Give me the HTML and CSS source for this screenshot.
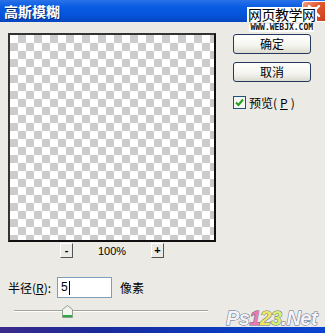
FILE: index.html
```html
<!DOCTYPE html>
<html>
<head>
<meta charset="utf-8">
<link rel="stylesheet" href="styles.css">
</head>
<body>
<div class="dialog">
  <div class="titlebar">
    <span class="title">高斯模糊</span>
    <span class="close"><svg width="14" height="14" viewBox="0 0 14 14"><path d="M2 2 L12 12 M12 2 L2 12" stroke="#fff" stroke-width="2.4" stroke-linecap="round"/></svg></span>
  </div>
  <div class="content">
    <div class="left">
      <div class="preview"></div>
      <div class="zoomrow">
        <span class="zbtn">-</span>
        <span class="zoomval">100%</span>
        <span class="zbtn">+</span>
      </div>
      <div class="radiusrow">
        <span class="lbl">半径(<u>R</u>):</span>
        <span class="input">5<i class="caret"></i></span>
        <span class="unit">像素</span>
      </div>
      <div class="slider">
        <div class="track"></div>
        <svg class="thumb" width="11" height="13" viewBox="0 0 11 13"><path d="M0.5 4.5 L5.5 0.5 L10.5 4.5 L10.5 12.5 L0.5 12.5 Z" fill="#f4f4ee" stroke="#8aa08a"/><path d="M1 10.5 H10 M1 11.5 H10" stroke="#2fa84a"/></svg>
      </div>
    </div>
    <div class="right">
      <button class="btn">确定</button>
      <button class="btn btn2">取消</button>
      <label class="check"><span class="box"><svg width="9" height="9" viewBox="0 0 9 9"><path d="M1 4.5 L3.5 7 L8 1.5" fill="none" stroke="#21a121" stroke-width="2"/></svg></span>预览(<u>P</u>)</label>
    </div>
  </div>
  <div class="bottombar"></div>
  <div class="wm-top">
    <div class="wm-cn">网页教学网</div>
    <div class="wm-en">WWW.WEBJX.COM</div>
  </div>
  <div class="wm-bottom">Ps<span class="c1">1</span><span class="c2">2</span><span class="c3">3</span>.Net</div>
</div>
</body>
</html>
```
FILE: styles.css
```css
html, body {
  margin: 0;
  padding: 0;
}
body {
  width: 325px;
  height: 333px;
  overflow: hidden;
  background: #ebeae4;
  font-family: "Noto Sans CJK SC", "Liberation Sans", sans-serif;
  font-size: 12px;
  color: #000;
}
.dialog {
  position: relative;
  width: 325px;
  height: 333px;
  display: flex;
  flex-direction: column;
}
.titlebar {
  height: 22px;
  flex: none;
  display: flex;
  align-items: center;
  justify-content: space-between;
  background: linear-gradient(#2a72e8 0%, #0a5de3 30%, #0553d8 70%, #0746c0 100%);
}
.title {
  color: #fff;
  font-weight: bold;
  font-size: 14px;
  padding-left: 4px;
  text-shadow: 1px 1px 0 #0a2a78;
  line-height: 22px;
}
.close {
  width: 23px;
  height: 21px;
  border: 1px solid #fff;
  border-right: none;
  border-radius: 3px 0 0 3px;
  background: linear-gradient(135deg, #f0a080 0%, #e2572d 45%, #c8401e 100%);
  display: flex;
  align-items: center;
  justify-content: center;
  box-sizing: border-box;
}
.content {
  flex: 1;
  display: flex;
  padding: 11px 0 0 8px;
  gap: 17px;
}
.left {
  width: 208px;
  display: flex;
  flex-direction: column;
}
.preview {
  width: 208px;
  height: 209px;
  box-sizing: border-box;
  border: 2px solid #111;
  border-top-color: #333;
  border-left-color: #333;
  background-color: #fff;
  background-image:
    linear-gradient(45deg, #cccccc 25%, transparent 25%, transparent 75%, #cccccc 75%),
    linear-gradient(45deg, #cccccc 25%, transparent 25%, transparent 75%, #cccccc 75%);
  background-size: 16px 16px;
  background-position: 0 0, 8px 8px;
}
.zoomrow {
  height: 16px;
  display: flex;
  align-items: center;
  padding-left: 52px;
}
.zbtn {
  width: 13px;
  height: 15px;
  box-sizing: border-box;
  border-right: 1px solid #555;
  border-bottom: 1px solid #555;
  border-top: 1px solid #fff;
  border-left: 1px solid #fff;
  font-family: "Liberation Sans", sans-serif;
  font-size: 11px;
  line-height: 12px;
  text-align: center;
  font-weight: bold;
}
.zoomval {
  width: 78px;
  text-align: center;
  font-family: "Liberation Sans", sans-serif;
  font-size: 11px;
  padding-top: 1px;
}
.radiusrow {
  margin-top: 19px;
  height: 21px;
  display: flex;
  align-items: center;
}
.lbl {
  width: 49px;
  white-space: nowrap;
}
.input {
  width: 55px;
  height: 21px;
  box-sizing: border-box;
  border: 1px solid #7f9db9;
  background: #fff;
  padding-left: 3px;
  font-family: "Liberation Sans", sans-serif;
  font-size: 12px;
  line-height: 19px;
  display: flex;
  align-items: center;
}
.caret {
  display: inline-block;
  width: 1px;
  height: 14px;
  background: #000;
  margin-left: 1px;
}
.unit {
  margin-left: 8px;
}
.slider {
  position: relative;
  margin-top: 7px;
  height: 13px;
  margin-left: 6px;
  width: 194px;
}
.track {
  position: absolute;
  left: 0;
  right: 0;
  top: 5px;
  height: 1px;
  background: #a4a49a;
  border-bottom: 1px solid #fff;
}
.thumb {
  position: absolute;
  left: 48px;
  top: 0;
}
.right {
  display: flex;
  flex-direction: column;
  padding-top: 1px;
}
.btn {
  width: 78px;
  height: 20px;
  box-sizing: border-box;
  border: 1px solid #23395e;
  border-radius: 3px;
  background: linear-gradient(#ffffff 0%, #f4f4ef 60%, #dcdad0 100%);
  font-family: "Noto Sans CJK SC", sans-serif;
  font-size: 12px;
  line-height: 16px;
  padding: 0;
  color: #000;
}
.btn2 {
  margin-top: 8px;
}
.check {
  margin-top: 13px;
  display: flex;
  align-items: center;
  gap: 3px;
  height: 14px;
}
.box {
  width: 13px;
  height: 13px;
  box-sizing: border-box;
  border: 1px solid #1c5180;
  background: #f6f6f2;
  display: flex;
  align-items: center;
  justify-content: center;
}
.bottombar {
  flex: none;
  height: 6px;
  background: linear-gradient(90deg, #3a2a8a, #1a2a9a 30%, #0a3cc0 70%, #0a44d0);
}
.wm-top {
  position: absolute;
  left: 247px;
  top: 4px;
  display: flex;
  flex-direction: column;
  align-items: center;
}
.wm-cn {
  font-size: 14px;
  line-height: normal;
  color: #000;
  background: linear-gradient(transparent 15%, #fff 15%, #fff 88%, transparent 88%);
  padding: 0 1px;
  letter-spacing: -0.5px;
}
.wm-en {
  font-family: "DejaVu Sans Mono", monospace;
  font-size: 8px;
  line-height: 8px;
  font-weight: bold;
  background: #fff;
  color: #111;
  padding: 0 1px;
}
.wm-bottom {
  position: absolute;
  left: 226px;
  top: 307px;
  font-family: "Liberation Sans", sans-serif;
  font-weight: bold;
  font-style: italic;
  font-size: 20px;
  line-height: 22px;
  color: #f4f4f8;
  letter-spacing: -0.5px;
  -webkit-text-stroke: 1px #5a6a8a;
  paint-order: stroke fill;
}
.c1 { color: #f07ab0; }
.c2 { color: #f2e860; }
.c3 { color: #d8f070; }
```
